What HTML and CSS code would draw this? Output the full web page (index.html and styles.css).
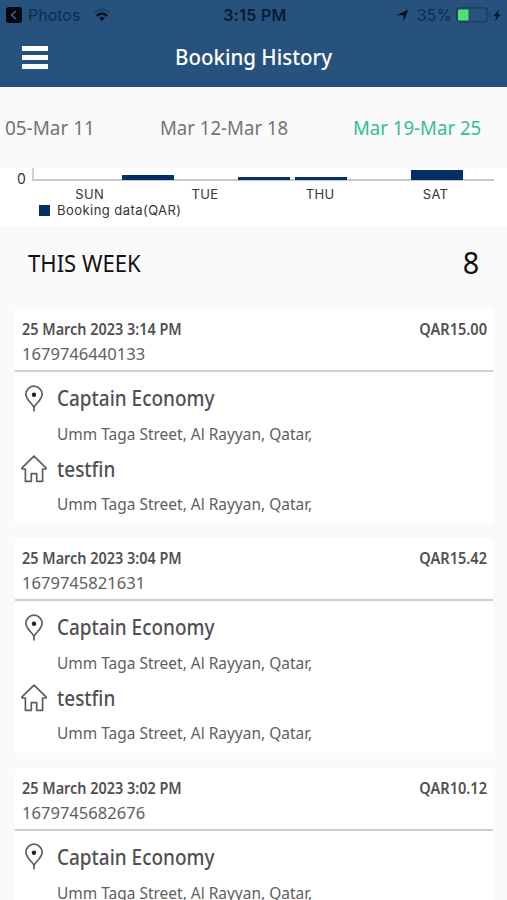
FILE: index.html
```html
<!DOCTYPE html>
<html lang="en">
<head>
<meta charset="utf-8">
<title>Booking History</title>
<link rel="stylesheet" href="styles.css">
</head>
<body>
<svg class="defs" aria-hidden="true">
  <symbol id="pin" viewBox="0 0 26 28"><path d="M13 26.5V22.5C11.6 18.3 4.9 15.3 4.9 9.3A8.1 8.1 0 0 1 21.1 9.3C21.1 15.3 14.4 18.3 13 22.5" fill="none" stroke="#5c5c66" stroke-width="1.7"/><circle cx="13" cy="9.8" r="2.2" fill="#222"/></symbol>
  <symbol id="home" viewBox="0 0 26 28"><path d="M13 1.2 1 12.8V14H4.4V26.3H10.3V18.6H15.7V26.3H21.6V14H25V12.8Z" fill="none" stroke="#5c5c66" stroke-width="1.7" stroke-linejoin="round"/></symbol>
</svg>
<header class="top">
  <div class="status">
    <div class="status-left">
      <svg width="16" height="16" viewBox="0 0 16 16"><rect width="16" height="16" rx="3" fill="#05080f"/><path d="M10 4 5.5 8 10 12" fill="none" stroke="#416388" stroke-width="1.6"/></svg>
      <span class="photos">Photos</span>
      <svg class="wifi" width="18" height="14" viewBox="0 0 18 14"><path d="M1 5Q9-2 17 5" fill="none" stroke="#1c426c" stroke-width="2"/><path d="M3.8 8Q9 3.2 14.2 8" fill="none" stroke="#07101e" stroke-width="2.4"/><path d="M6 10Q9 7.4 12 10L9 13Z" fill="#07101e"/></svg>
    </div>
    <span class="clock">3:15 PM</span>
    <div class="status-right">
      <svg width="13" height="13" viewBox="0 0 13 13"><path d="M12.5.5 7.5 12.5V6.2L.5 6.2Z" fill="#07101e"/></svg>
      <span class="percent">35%</span>
      <svg class="battery" width="36" height="16" viewBox="0 0 36 16"><rect x=".6" y=".8" width="30.5" height="14" rx="3" fill="none" stroke="#163b5e" stroke-width="1.2"/><rect x="2" y="2.5" width="10.5" height="11" rx="1" fill="#55df72"/><path d="M33 5Q35.5 8 33 11Z" fill="#163b5e"/></svg>
      <svg class="bolt" width="8" height="13" viewBox="0 0 8 13"><path d="M5.8.5.5 7.2H3.5L2 12.5 7.5 5.3H4.5Z" fill="#07101e"/></svg>
    </div>
  </div>
  <div class="nav">
    <div class="menu"><i></i><i></i><i></i></div>
    <h1><span class="fit title">Booking History</span></h1>
  </div>
</header>
<nav class="weeks">
  <div class="w1"><span class="fit week">05-Mar 11</span></div>
  <div class="w2"><span class="fit week">Mar 12-Mar 18</span></div>
  <div class="w3"><span class="fit week">Mar 19-Mar 25</span></div>
</nav>
<section class="chart">
  <div class="plot">
    <span class="zero">0</span>
    <div class="bars"><i></i><i class="b5"></i><i></i><i class="b2"></i><i class="b2"></i><i></i><i class="b10"></i></div>
  </div>
  <div class="days"><span>SUN</span><span>TUE</span><span>THU</span><span>SAT</span></div>
  <div class="legend"><i></i><span>Booking data(QAR)</span></div>
</section>
<section class="summary">
  <span class="fit this-week">THIS WEEK</span>
  <span class="fit right count">8</span>
</section>
<main>
  <article>
    <div class="meta"><span class="fit date">25 March 2023 3:14 PM</span><span class="fit right price">QAR15.00</span></div>
    <div class="id"><span class="fit number">1679746440133</span></div>
    <div class="stop"><svg><use href="#pin"/></svg><span class="fit name">Captain Economy</span></div>
    <div class="address"><span class="fit street">Umm Taga Street, Al Rayyan, Qatar,</span></div>
    <div class="stop"><svg><use href="#home"/></svg><span class="fit name">testfin</span></div>
    <div class="address"><span class="fit street">Umm Taga Street, Al Rayyan, Qatar,</span></div>
  </article>
  <article>
    <div class="meta"><span class="fit date">25 March 2023 3:04 PM</span><span class="fit right price">QAR15.42</span></div>
    <div class="id"><span class="fit number">1679745821631</span></div>
    <div class="stop"><svg><use href="#pin"/></svg><span class="fit name">Captain Economy</span></div>
    <div class="address"><span class="fit street">Umm Taga Street, Al Rayyan, Qatar,</span></div>
    <div class="stop"><svg><use href="#home"/></svg><span class="fit name">testfin</span></div>
    <div class="address"><span class="fit street">Umm Taga Street, Al Rayyan, Qatar,</span></div>
  </article>
  <article>
    <div class="meta"><span class="fit date">25 March 2023 3:02 PM</span><span class="fit right price">QAR10.12</span></div>
    <div class="id"><span class="fit number">1679745682676</span></div>
    <div class="stop"><svg><use href="#pin"/></svg><span class="fit name">Captain Economy</span></div>
    <div class="address"><span class="fit street">Umm Taga Street, Al Rayyan, Qatar,</span></div>
  </article>
</main>
</body>
</html>
```
FILE: styles.css
```css
* { box-sizing: border-box; }
html, body { height: 900px; overflow: hidden; }
body { margin: 0; background: #fafafa; color: #505052; font-family: "Noto Sans", sans-serif; }
svg { display: block; flex: none; }
.defs { display: none; }
.fit { display: inline-block; white-space: nowrap; transform-origin: left center; }
.fit.right { transform-origin: right center; }

.top { height: 87px; background: #27527d; }
.status { height: 30px; display: grid; grid-template-columns: 1fr auto 1fr; align-items: center; padding: 0 6px; font: 16px/30px Inter, sans-serif; color: #0a1a30; }
.status-left, .status-right { display: flex; align-items: center; }
.status-right { justify-content: flex-end; }
.photos { margin-left: 6px; letter-spacing: 0; color: #102c4d; }
.wifi { margin-left: 13px; }
.clock { font-weight: 600; letter-spacing: .3px; margin-left: 3px; }
.percent { margin: 0 4px 0 8px; color: #102c4d; }
.bolt { margin-left: 1px; }
.nav { height: 54px; display: grid; grid-template-columns: 175px 1fr; align-items: center; }
.menu { display: grid; gap: 4px; width: 26px; margin: 1px 0 0 22px; }
.menu i { height: 5px; background: #fff; }
h1 { margin: 0; color: #fff; font-size: 22px; line-height: 30px; font-weight: 500; }
.title { transform: translateY(-1px) scaleX(.932); }

.weeks { height: 81px; display: grid; grid-template-columns: 155px 193px 1fr; align-items: center; padding: 0 0 1px 5px; font-size: 20px; color: #737373; }
.week { transform: scaleX(.93); }
.w1 .week { transform: scaleX(.945); }
.w3 { color: #36bd91; }

.chart { height: 58px; background: #fff; font-family: Inter, sans-serif; color: #333; font-size: 13px; }
.plot { height: 13px; display: flex; padding-left: 17px; }
.zero { width: 15px; font-size: 14px; line-height: 21px; }
.bars { width: 462px; display: grid; grid-template-columns: repeat(7, 57.7px); align-items: end; padding-left: 28.5px; border-left: 2px solid #cfcfd1; border-bottom: 2px solid #c8c8ca; }
.bars i { width: 52px; margin: 0 0 -1px 2px; background: #032f66; }
.bars .b5 { height: 5px; }
.bars .b2 { height: 3px; }
.bars .b10 { height: 10px; }
.days { height: 22px; display: grid; grid-template-columns: repeat(4, 115.3px); margin-left: 32px; line-height: 27px; text-align: center; letter-spacing: .35px; }
.legend { display: flex; align-items: center; gap: 7px; padding-left: 39px; height: 14px; letter-spacing: .45px; }
.legend i { width: 11px; height: 11px; background: #032f66; }

.summary { height: 83px; display: flex; justify-content: space-between; align-items: center; padding: 0 28px; color: #111; }
.this-week { font-size: 23px; transform: translateY(-5px) scaleX(.96); }
.count { font-size: 30px; transform: translateY(-5px) scaleX(.96); }

main { display: grid; gap: 15px; padding: 0 14px 0 15px; }
article { height: 214.3px; background: #fff; border-radius: 3px; }
.meta { display: flex; justify-content: space-between; padding: 9px 6px 0 7px; font-size: 15.5px; line-height: 22px; font-weight: 600; }
.date { transform: scaleX(.93); }
.price { transform: scaleX(.94); }
.id { height: 32px; padding-left: 7px; border-bottom: 2px solid #cecece; font-size: 16px; line-height: 29px; color: #606060; }
.number { transform: scaleX(1.035); }
.stop { height: 42px; display: flex; align-items: center; padding-left: 6px; }
.id + .stop { height: 43px; margin-top: 5px; }
.stop svg { width: 26px; height: 28px; margin-right: 10px; }
.name { font-size: 21px; font-weight: 500; line-height: 35px; transform: scaleX(.902); }
.address { height: 28px; padding-left: 42px; font-size: 16.5px; line-height: 28px; color: #606060; }
.street { transform: scaleX(.937); }
```
